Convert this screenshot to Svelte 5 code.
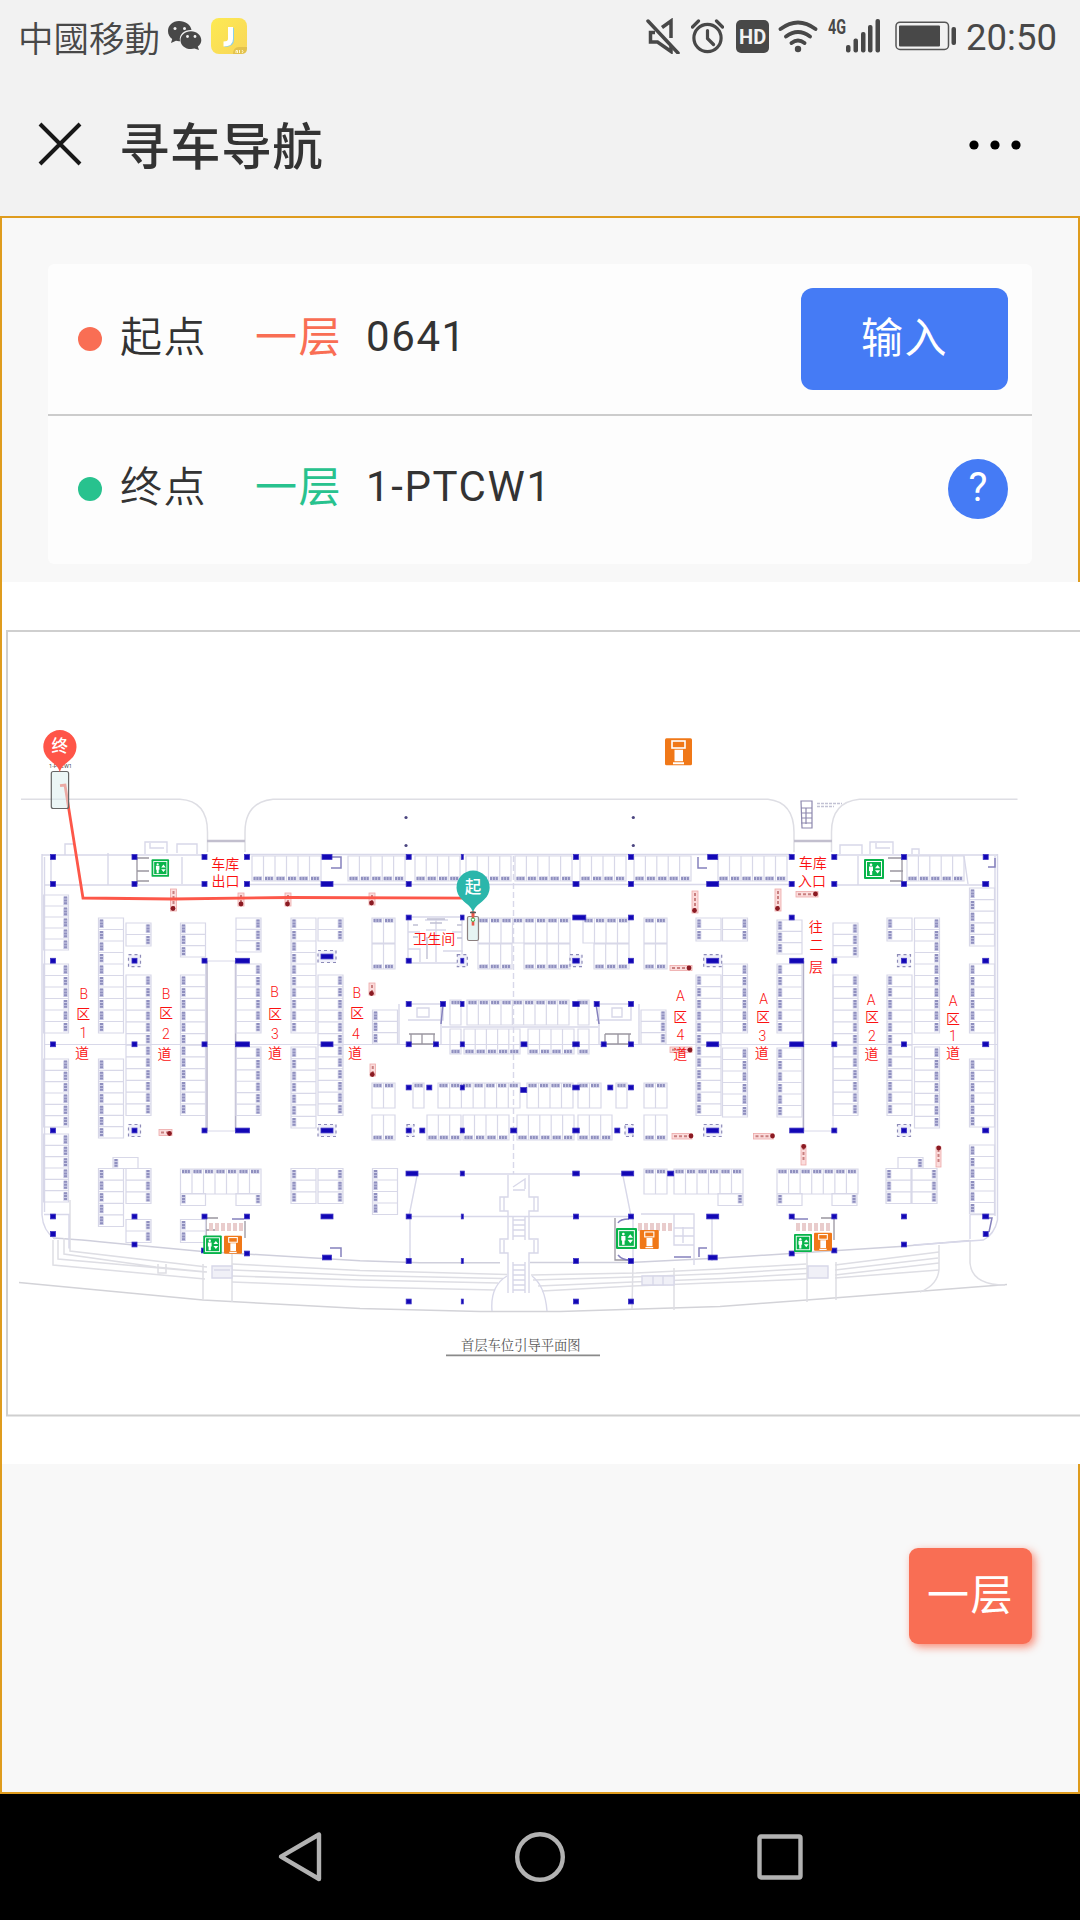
<script>
  // Vertical stacks of bays: x, y, height, number of bays, side carrying the bay numbers
  const stacks = [
    [43.5, 895, 55, 5, 'r'], [43.5, 964, 69, 6, 'r'], [43.5, 1059, 68, 6, 'r'], [43.5, 1134, 68, 6, 'r'],
    [98.5, 918, 115, 10, 'l'], [98.5, 1059, 79, 7, 'l'], [98.5, 1168.5, 58, 5, 'l'],
    [126, 923, 23, 2, 'r'], [126, 975, 140.5, 12, 'r'], [126, 1168.5, 35, 3, 'r'], [126, 1219.5, 23, 2, 'r'],
    [180.5, 923, 34, 3, 'l'], [180.5, 975, 140.5, 12, 'l'], [180.5, 1219.5, 23, 2, 'l'],
    [236, 918, 34, 3, 'r'], [236, 964, 69, 6, 'r'], [236, 1047, 68.5, 6, 'r'],
    [291, 918, 115, 10, 'l'], [291, 1047, 81, 7, 'l'], [291, 1168.5, 35, 3, 'l'],
    [318, 918, 23, 2, 'r'], [318, 975, 140.5, 12, 'r'], [318, 1168.5, 35, 3, 'r'],
    [372.5, 1010, 34, 3, 'l'], [372.5, 1168.5, 46, 4, 'l'], [641, 1010, 34, 3, 'r'],
    [696, 918, 23, 2, 'l'], [696, 975, 140.5, 12, 'l'],
    [722.5, 918, 23, 2, 'r'], [722.5, 964, 69, 6, 'r'], [722.5, 1048, 69, 6, 'r'],
    [777, 920, 34, 3, 'l'], [777, 964, 69, 6, 'l'], [777, 1048, 69, 6, 'l'],
    [833, 923, 34, 3, 'r'], [833, 975, 140.5, 12, 'r'],
    [887, 918, 23, 2, 'l'], [887, 975, 140.5, 12, 'l'], [886, 1168.5, 35, 3, 'l'],
    [914.5, 918, 115, 10, 'r'], [914.5, 1047, 81, 7, 'r'], [912, 1168.5, 35, 3, 'r'],
    [969.5, 888, 58, 5, 'l'], [969.5, 964, 69, 6, 'l'], [969.5, 1059, 68, 6, 'l'], [969.5, 1145, 69, 6, 'l'],
    [113, 1157.5, 11, 1, 'l'], [180.5, 1193.5, 12, 1, 'l'], [236, 1193.5, 12, 1, 'r'],
    [718, 1193.5, 12, 1, 'r'], [777, 1193.5, 12, 1, 'l'], [832, 1193.5, 12, 1, 'r'], [898, 1157.5, 11, 1, 'r']
  ];
  // Horizontal rows of bays: x, y, width, number of bays, side carrying the bay numbers
  const rows = [
    [252, 856, 69, 6, 'b'], [348, 856, 57, 5, 'b'], [415, 856, 45, 4, 'b'], [466, 856, 45, 4, 'b'],
    [515, 856, 57, 5, 'b'], [580, 856, 46, 4, 'b'], [634, 856, 57, 5, 'b'], [718, 856, 69, 6, 'b'], [907, 856, 57, 5, 'b'],
    [372, 918, 23, 2, 't'], [478, 918, 92, 8, 't'], [583, 918, 46, 4, 't'], [644, 918, 23, 2, 't'],
    [372, 944, 23, 2, 'b'], [478, 944, 34, 3, 'b'], [524, 944, 46, 4, 'b'], [594, 944, 35, 3, 'b'], [644, 944, 23, 2, 'b'],
    [450, 1000, 11, 1, 't'], [467, 1000, 102, 9, 't'], [578, 1000, 11, 1, 't'],
    [450, 1029, 11, 1, 'b'], [464, 1029, 56, 5, 'b'], [528, 1029, 46, 4, 'b'], [578, 1029, 11, 1, 'b'],
    [372, 1083, 23, 2, 't'], [413, 1083, 11, 1, 't'], [438, 1083, 82, 7, 't'], [527, 1083, 46, 4, 't'],
    [578, 1083, 23, 2, 't'], [616, 1083, 11, 1, 't'], [644, 1083, 23, 2, 't'],
    [372, 1115, 23, 2, 'b'], [427, 1115, 34, 3, 'b'], [463, 1115, 46, 4, 'b'], [517, 1115, 57, 5, 'b'],
    [578, 1115, 34, 3, 'b'], [644, 1115, 23, 2, 'b'],
    [180.5, 1169, 80.5, 7, 't'], [644, 1169, 23, 2, 't'], [674, 1169, 69, 6, 't'], [777, 1169, 81, 7, 't']
  ];
  // Pillars grouped by y: [x, width?]
  const pillarRows = [
    [857, [[53], [134.5], [204.5], [247], [327, 10], [408.7], [462.3, 2], [576], [631], [712.7, 10], [791.7], [834.3], [904], [985.7]]],
    [884, [[53], [134.5], [204.5], [247], [327, 12], [408.7], [576, 6], [631], [712.7, 12], [791.7], [834.3], [904], [985.7, 6]]],
    [917.5, [[408.7], [462.3, 3.5], [579.3, 13], [631], [791.7]]],
    [956.5, [[327, 12]]],
    [960.7, [[53], [134.5], [204.5], [242.5, 14], [408.7], [462.3, 3], [576, 6.5], [631], [712.7, 12], [796.7, 14], [834.3], [904], [985.7, 6]]],
    [1004, [[408.7], [443], [462.3, 3.5], [576, 6.5], [596.7], [631]]],
    [1044.3, [[53], [134.5], [204.5], [242.5, 14], [327, 12], [408.7], [436], [462.3, 4], [524, 6], [576, 6.5], [603.7], [631], [712.7, 12], [796.7, 14], [834.3], [904], [985.7, 6]]],
    [1087.5, [[408.7], [429.3], [462.3, 4], [576, 6.5], [610.3], [631]]],
    [1090, [[523.7, 6]]],
    [1130.5, [[53], [134.5], [204.5], [242.5, 14], [327, 12], [408.7], [422.3], [462.3, 4], [513.7, 6], [576, 6.5], [617.3], [631], [712.7, 12], [796.7, 14], [834.3], [904], [985.7, 6]]],
    [1173.5, [[412, 12], [462.3, 4], [576, 6.5], [627.7, 12], [670.7, 6]]],
    [1216.5, [[53], [134.5], [204.5], [247], [327, 12], [408.7], [462.3, 2], [576], [631], [712.7, 12], [791.7], [834.3], [904], [985.7, 6]]],
    [1234, [[53], [985.7]]],
    [1244.5, [[134.5], [904]]],
    [1250.5, [[204], [834.3]]],
    [1253.5, [[247], [791.7]]],
    [1257.5, [[327, 9], [712.7, 9]]],
    [1261, [[408.7], [462.3, 2], [576], [631]]],
    [1301.5, [[408.7], [462.3, 2], [576], [631]]]
  ];
  const pillars = pillarRows.flatMap(([y, list]) => list.map(([x, w = 5]) => ({ x: x - w / 2, y: y - 2.4, w })));
  const shafts = [
    [134.5, 960.7, 12], [327, 956.5, 18], [462.3, 960.7, 10], [576, 960.7, 12], [712.7, 960.7, 18], [904, 960.7, 13],
    [134.5, 1130.5, 12], [327, 1130.5, 18], [410.5, 1130.5, 7], [629, 1130.5, 8], [712.7, 1130.5, 18], [904, 1130.5, 13]
  ];
  // Barrier markers: x, y, width, height, dot x, dot y
  const barriers = [
    [170.5, 889, 6, 22, 173, 908.5], [238, 893, 6, 13, 241, 904], [285, 893, 6, 13, 287.5, 904],
    [369, 893, 6, 12, 371.5, 903], [692, 891, 6, 22, 694.5, 910.5], [775, 889, 6, 22, 777.5, 908.5],
    [796, 891.5, 22, 5.5, 815.5, 894], [369, 983, 6, 12, 371.5, 993.5], [670, 965.5, 22, 5, 689, 968],
    [370, 1064, 5.5, 12, 372.3, 1074.5], [670, 1047, 22, 5.5, 690, 1050], [672, 1133.5, 20, 5.5, 691, 1136],
    [159, 1129.5, 13, 6, 169.5, 1133.5], [753.5, 1133.5, 20, 5.5, 772.5, 1136],
    [801, 1145, 5, 20, 803.7, 1146.5], [936, 1147, 5, 20, 938.7, 1148]
  ];
  const elevators = [[160.3, 868, 17.5], [874, 869, 20], [212.5, 1244.7, 18.5], [626.5, 1238.5, 21], [803, 1243, 18]];
  const kiosks = [[678.5, 751.7, 27], [233, 1244.7, 18], [649.3, 1239.5, 19], [823, 1241.7, 18]];
  // Aisle labels, one glyph per entry: text, centre x, baseline
  const aisle = [
    ['B', 83.7, 999], ['区', 83.3, 1019.3], ['1', 83.5, 1037.7], ['道', 82, 1058.3],
    ['B', 166, 999], ['区', 166, 1018.3], ['2', 166, 1039], ['道', 164.5, 1059.3],
    ['B', 274.5, 997], ['区', 275, 1019.3], ['3', 275, 1039], ['道', 275, 1058.3],
    ['B', 356.7, 998], ['区', 357, 1018.3], ['4', 356, 1038.5], ['道', 355, 1058.3],
    ['A', 680.3, 1001], ['区', 680.3, 1022], ['4', 680.3, 1040], ['道', 680.3, 1058.8],
    ['A', 763.7, 1004], ['区', 763, 1022.3], ['3', 762.5, 1040.5], ['道', 761.7, 1058.3],
    ['A', 871, 1005], ['区', 872, 1022.3], ['2', 872, 1040.5], ['道', 871.5, 1059.3],
    ['A', 953, 1006], ['区', 953, 1024.3], ['1', 953, 1041], ['道', 953, 1058.3],
    ['往', 815.7, 931.5], ['二', 816.5, 950.3], ['层', 816, 972],
    ['车库', 225.2, 869.3], ['出口', 225.5, 885.5], ['车库', 812.7, 868.3], ['入口', 812, 885.5], ['卫生间', 434.3, 944]
  ];
  const stackPath = ([x, y, h, n]) =>
    `M${x} ${y}h25v${h}h-25z` + Array.from({ length: n - 1 }, (_, i) => `M${x} ${y + (h * (i + 1)) / n}h25`).join('');
  const rowPath = ([x, y, w, n]) =>
    `M${x} ${y}h${w}v25h${-w}z` + Array.from({ length: n - 1 }, (_, i) => `M${x + (w * (i + 1)) / n} ${y}v25`).join('');
  const bays = stacks.map(stackPath).join('') + rows.map(rowPath).join('');
  const numbers =
    stacks.map(([x, y, h, n, s]) => Array.from({ length: n }, (_, i) => `M${s === 'l' ? x + 3 : x + 22} ${y + (h * i) / n + 1.5}v8.5`).join('')).join('') +
    rows.map(([x, y, w, n, s]) => Array.from({ length: n }, (_, i) => `M${x + (w * i) / n + 1.5} ${s === 't' ? y + 2.5 : y + 22.5}h8.5`).join('')).join('');
</script>

<div class="screen">
  <header>
    <div class="status">
      <span class="carrier">中國移動</span>
      <svg class="wechat" width="35" height="32" viewBox="0 0 35 32">
        <path fill="#484848" d="M12 1C5.500 1 1 5.500 1 11c0 3.500 1.600 6 4.200 8L4 23l5-2.200c1.300.4 2.500.5 4 .4C11.500 14 18 9.500 24.500 10 23.500 4.500 18.500 1 12 1z" />
        <path fill="#484848" d="M24 11.200c-6 0-10.500 4-10.500 9S18 29 24 29c1.200 0 2.400-.2 3.500-.5L32 30l-1.200-3.500c2.200-1.600 3.500-3.800 3.500-6.300 0-5-4.500-9-10.300-9z" />
        <g fill="#f2f2f2"><circle cx="8" cy="8.500" r="1.500" /><circle cx="17.500" cy="8.500" r="1.500" /><circle cx="20.500" cy="16.500" r="1.400" /><circle cx="28" cy="16.500" r="1.400" /></g>
      </svg>
      <svg class="app" width="36" height="36" viewBox="0 0 36 36">
        <defs><linearGradient id="sun" x1="0" y1="0" x2="1" y2="1"><stop offset="0" stop-color="#fdea52" /><stop offset="1" stop-color="#f8d65a" /></linearGradient></defs>
        <rect width="36" height="36" rx="8" fill="url(#sun)" />
        <path d="M22 36c0-4 2-7 6-7h8v2q0 5-6 5z" fill="#e3c24d" />
        <path d="M21 10v12q0 5-7.500 5" fill="none" stroke="#8bd0ea" stroke-width="4" />
        <path d="M19.500 9v12q0 5-7 5" fill="none" stroke="#fff" stroke-width="5" />
        <path d="M25 35v-2.500h1.500V35M28.500 32v3M31 32l1 1.500-1 1.500" fill="none" stroke="#fff8cf" stroke-width="1" />
      </svg>
      <span class="grow"></span>
      <svg class="mute" width="35" height="36" viewBox="0 0 35 36" fill="none" stroke="#484848" stroke-width="3.500">
        <path d="M16 9.500l9-6.500v17" /><path d="M9 14.500H4.500v9.500h7l13.500 9.500v-6" /><path d="M2 3l30 32" stroke-linecap="round" />
      </svg>
      <svg class="alarm" width="33" height="36" viewBox="0 0 33 36" fill="none" stroke="#484848" stroke-width="3.200">
        <circle cx="16.500" cy="20" r="13.600" /><path d="M16.500 12.500v8l6 6M1.500 9l6-6M31.500 9l-6-6" stroke-linecap="round" />
      </svg>
      <span class="hd">HD</span>
      <svg class="wifi" width="40" height="34" viewBox="0 0 40 34" fill="none" stroke="#484848" stroke-width="3.800" stroke-linecap="round">
        <path d="M2.500 10q17.500-13 35 0M8 17.500q12-9 24 0M13.500 24q6.500-5 13 0" /><circle cx="20" cy="30" r="3.200" fill="#484848" stroke="none" />
      </svg>
      <svg class="signal" width="54" height="46" viewBox="0 -5 54 46">
        <text x="1" y="15.500" class="g4" textLength="18" lengthAdjust="spacingAndGlyphs">4G</text>
        <g fill="#484848"><rect x="19" y="27" width="4.500" height="7.500" rx="2" /><rect x="26.500" y="20.500" width="4.500" height="14" rx="2" /><rect x="34" y="14" width="4.500" height="20.500" rx="2" /><rect x="41" y="7" width="4.500" height="27.500" rx="2" /><rect x="48.500" y="1" width="4.500" height="33.500" rx="2" /></g>
      </svg>
      <svg class="battery" width="62" height="30" viewBox="0 0 62 30">
        <rect x="1" y="1.200" width="52.500" height="27.300" rx="4" fill="none" stroke="#555" stroke-width="1.500" />
        <rect x="4" y="4.500" width="41" height="21" rx="1" fill="#484848" /><rect x="56.500" y="6" width="4.500" height="18" rx="2" fill="#484848" />
      </svg>
      <span class="time">20:50</span>
    </div>
    <div class="bar">
      <svg width="44" height="44" viewBox="0 0 44 44"><path d="M2 2l40 40M42 2L2 42" stroke="#181818" stroke-width="4" /></svg>
      <h1>寻车导航</h1>
      <svg class="more" width="54" height="12" viewBox="0 0 54 12"><circle cx="6" cy="6" r="4.600" /><circle cx="27" cy="6" r="4.600" /><circle cx="48" cy="6" r="4.600" /></svg>
    </div>
  </header>

  <main>
    <section class="card">
      <div class="row">
        <i class="dot coral"></i><span class="label">起点</span><span class="floor from">一层</span><span class="value">0641</span>
        <button class="enter">输入</button>
      </div>
      <div class="row">
        <i class="dot green"></i><span class="label">终点</span><span class="floor to">一层</span><span class="value">1-PTCW1</span>
        <button class="help">?</button>
      </div>
    </section>

    <svg class="map" width="1078" height="882" viewBox="2 582 1078 882">
      <rect x="2" y="582" width="1078" height="882" fill="#fff" />
      <path d="M1080 631H7v784.500h1073" fill="none" stroke="#cfcfcf" stroke-width="2" />

      <!-- Floor plan linework is printed soft under the crisp labels -->
      <g class="plan">
      <g fill="none" stroke="#dedee4" stroke-width="1.500">
        <path d="M21 799.300H180Q207.500 801 207.500 832v20M245 852v-20q0-30 28-32.700H768q26 3 26 33v20M831.500 852v-20q0-30 28-32.700h158" />
        <path d="M19 1282.500l184 17.500 157 8.500 120 3h80l160-5 120-9 167-13" stroke="#d3d3d8" />
        <path d="M53 1238q14 .5 57 4.700l90 8.500 160 9.500 60 2h80M530 1262.500h100l90-4.500 180-11.500 70-6" stroke="#cfcfdc" />
        <path d="M70 1200v51l137 16M64 1238v16l92 13 51 5M58 1240v19l147 13M53 1240v25l152 14M232 1264l128 6.500 147 4M232 1270l128 5.500 143 3M232 1276l128 4 138 3M232 1282l128 5 135 3M531 1275l105-2 84-4 86-5M533 1280l100-3 90-3.500 84-5M538 1286l95-4 90-3.500 84-5M542 1291l91-5 174-7M835 1265l104-13M835 1270l103-12M835 1275l104-12M835 1278l104-8" />
        <path d="M939 1245v24q-1 16-19 23M970 1240v23q2 22 35 22M203 1264v36M232 1254v48M807 1253v49M836 1262v38M633 1262l-1 47M674 1268v42M158 1264v9h8v-9" />
      </g>
      <path d="M207 841h38M794 841h38" stroke="#c2bfce" stroke-width="2.400" />

      <g fill="none" stroke="#d8d8e9" stroke-width="1.400">
        <path d="M42 855H205M247 854.500h545M834 855h163M42 854v361q1 16 13 24M44.500 857v355M44 885h161M834 885h151M995 856v360M997.500 854v366q-3 14-14 20l-70 5M246 884.500h545" />
        <path d="M51 857v27M108 853v32M182 857v27M65 855v-11h10M145 854v-12h22v11M150 843v5h14M177 853v-9h20v10M840 854v-9h22v9M870 854v-12h23v12M876 843v5h14M912 854v-5h7v5M858 856v29M964 856l4 28" />
        <path d="M205.500 961v170h37M207 961h35M236 961v170M803 961v170h30M833 961v170M44 1044.500h953" stroke-width="1" />
        <path d="M513.500 856v318" stroke-dasharray="6 3" />
        <path d="M235.500 961v170M803.500 961v170M207 961v170" stroke="#b5b2c8" />
        <path d="M408 917h54v46h-54zM436 919v43M408 932h12M452 932h10M425 920h23M443 951h20M408 949h12v13M426 930h20" />
        <path d="M413 925h5M413 937h5M457 925h5M457 938h5M427 919h18M430 923h12M427 937v22" stroke="#c0c0d4" />
        <path d="M408 1004h35v16h-35M399 1004v40M417 1008v9h12v-9zM596 1004h35v16h-35M639 1004v40M612 1008v9h10v-9zM442 1027h156M441 1004v40M599 1004v40" />
        <path d="M412 1174h215M417 1176l-8 40M623 1176l8 40M410 1216.500h220M410 1216v46M633 1216v46M508 1175v22h-8v14h8v28h-8v14h8v40M529 1175v22h9v14h-9v28h9v14h-9v40M504 1197v14M534 1197v14M504 1240v13M534 1240v13" />
        <path d="M513 1220h12M513 1225h12M513 1230h12M513 1236h12M513 1265h12M513 1270h12M513 1275h12M513 1280h12M513 1285h12M513 1290h12M513 1216v24M525 1216v24M513 1262v31M525 1262v31M513 1190h12M513 1187l12-8v10" />
        <path d="M492 1311q-2-25 15-35M547 1311q-2-25-15-35M44 1214.500h25v34M970 1214.500h25M970 1215v24M712 1217v44M641 1214h53v51M674 1214v31h20M674 1228h20M674 1236h20M683 1227v16" />
        <path d="M212 1266h20v12h-20zM214 1270h16M808 1266h20v12h-20zM642 1276h32v9h-32zM653 1276v9M663 1276v9" fill="#f0f0f7" />
      </g>

      <g fill="none" stroke="#9a96a0" stroke-width="1.300">
        <path d="M137 858h12M137 871h12M137 881h12M137 857v27M409 1034h26M422 1034v10M434 1034v10M411 1034v10M409 1044h26M605 1034v10M618 1034v10M629 1034v10M605 1034h26M605 1044h26M888 858h13M890 871h13M890 881h13M902 857v27M206 1218h12M206 1230h12M821 1218h13v22M615 1218v42h16M206 1219v17M245 1221v17" />
      </g>
      <path d="M331 857h10v11h-10M698 857v11h9M988 867h7v-9M330 1248h11v9M699 1257v-9h8M674 1257h17M443 1004l-2 20M596 1004l3 20M618 1223q2-4 11-4M618 1255q4 5 12 5M988 1218h4l-3 14M232 1219h12M793 1219h15" fill="none" stroke="#8581bd" stroke-width="1.500" />

      <path d={bays} fill="none" stroke="#d8d8e8" stroke-width="1.200" />
      <path d={numbers} fill="none" stroke="#cfcfe8" stroke-width="4.600" />
      <path d={numbers} fill="none" stroke="#8f8fbe" stroke-width="3" stroke-dasharray="2 .9" />

      {#each shafts as [x, y, w]}
        <rect x={x - w / 2} y={y - 6} width={w} height="12" fill="#f0f0fa" stroke="#8d8bb8" stroke-width="1.200" stroke-dasharray="3 3" />
      {/each}
      <g fill="#1207b5" stroke="#3a30c4" stroke-width=".8">
        {#each pillars as p}<rect x={p.x} y={p.y} width={p.w} height="4.800" />{/each}
      </g>
      <g fill="#4b4580"><circle cx="406" cy="817.500" r="1.600" /><circle cx="406" cy="845.500" r="1.600" /><circle cx="633.300" cy="817.500" r="1.600" /><circle cx="633.300" cy="845.500" r="1.600" /></g>

      {#each barriers as [x, y, w, h, cx, cy]}
        <rect {x} {y} width={w} height={h} fill="#fbdcdc" stroke="#eda8a8" stroke-width=".8" />
        <path d={w > h ? `M${x + 2} ${y + h / 2}h${w - 6}` : `M${x + w / 2} ${y + 2}v${h - 5}`} stroke="#c98080" stroke-width="2" stroke-dasharray="3 2" />
        <circle {cx} {cy} r="2.400" fill="#8b1a22" />
      {/each}
      <path d="M209 1227h34M638 1227h34M796 1227h34" fill="none" stroke="#e9cccc" stroke-width="8" stroke-dasharray="4 2" />
      <g fill="none" stroke="#8d88ae" stroke-width="1.200"><path d="M801 801h11v27h-10zM801 808h11M801 813h11M801 818h11M801 823h11M806 808v16" /><path d="M817 803.500h25M817 806.500h17" stroke="#c2c2d4" stroke-dasharray="3 1" stroke-width="1.600" /></g>
      <path d="M446 1355.300h154" stroke="#8a8a8a" stroke-width="1.700" />
      </g>

      <text x="520.800" y="1350" class="caption">首层车位引导平面图</text>

      {#each aisle as [t, x, y]}<text {x} {y} class="aisle">{t}</text>{/each}

      {#each elevators as [x, y, s]}
        <g transform="translate({x - s / 2} {y - s / 2}) scale({s / 20})">
          <rect width="20" height="20" rx="1" fill="#09b44b" /><rect x="2.500" y="2.500" width="15" height="15" fill="none" stroke="#fff" stroke-width="1" />
          <circle cx="7" cy="5.800" r="1.300" fill="#fff" /><path d="M5 7.500h4v4.500H8.200V16H5.800v-4H5zM11 9.300l2.600-3.300 2.600 3.300zM11 11.300l2.600 3.300 2.600-3.300z" fill="#fff" />
        </g>
      {/each}
      {#each kiosks as [x, y, s]}
        <g transform="translate({x - s / 2} {y - s / 2}) scale({s / 27})">
          <rect width="27" height="27" rx="1.500" fill="#f07818" /><rect x="7" y="2.800" width="13" height="7" fill="none" stroke="#fff" stroke-width="1.600" />
          <path d="M9.500 11.500h8.500v11.500H9.500zM8 24h11v2H8z" fill="#fff" />
        </g>
      {/each}

      <text x="60.500" y="767.500" class="bay">1-PTCW1</text>
      <path d="M60 785.700l5-.7L83 898l90 1 117-1.500 183 .7M473 911v14.500" fill="none" stroke="#fd5749" stroke-width="2.800" />
      <rect x="51.300" y="771.500" width="17.300" height="37" rx="2" fill="#dcefee" fill-opacity=".55" stroke="#666" stroke-width="1.200" />
      <rect x="467.500" y="916.500" width="11" height="24" rx="1.500" fill="#dcefee" fill-opacity=".7" stroke="#8c8080" stroke-width="1.200" />
      <path d="M473 911v14.500" stroke="#e8584a" stroke-width="2.400" /><circle cx="473" cy="919.700" r="1.700" fill="#fff" stroke="#35b64a" />
      <path d="M470 912.500h6" stroke="#555" stroke-width="1.500" />
      <path d="M59.800 772c-2-7-6.500-8-11-13A16.600 16.600 0 1 1 71 759c-5 5-9 6-11.200 13z" fill="#ff5548" />
      <path d="M473 912.500c-2-7-6.500-8-11-13a16.600 16.600 0 1 1 22.200 0c-5 5-9 6-11.200 13z" fill="#2bb6ab" />
      <text x="59.800" y="752" class="pin">终</text><text x="473" y="892.800" class="pin">起</text>
    </svg>

    <button class="level">一层</button>
  </main>

  <nav>
    <svg width="46" height="52" viewBox="0 0 46 52"><path d="M42 3.500v44.500L4 25.700z" /></svg>
    <svg width="50" height="50" viewBox="0 0 50 50"><circle cx="25" cy="25" r="22.800" /></svg>
    <svg width="46" height="46" viewBox="0 0 46 46"><rect x="2.500" y="2.500" width="41" height="41" rx="1.500" /></svg>
  </nav>
</div>

<style>
  :global(body) { margin: 0; }
  .screen { width: 1080px; height: 1920px; display: flex; flex-direction: column; overflow: hidden; background: #f8f8f8; font-family: Roboto, "Noto Sans CJK SC", sans-serif; color: #333; }
  header { height: 216px; background: #f2f2f2; }
  .status { height: 72px; box-sizing: border-box; padding: 0 23px 0 18px; display: flex; align-items: center; color: #484848; }
  .carrier { font: 350 35.500px/72px "Noto Sans CJK TC", sans-serif; margin-top: 1px; }
  .wechat { margin: 0 0 0 7px; }
  .app { margin-left: 9px; }
  .grow { flex: 1; }
  .alarm { margin-left: 10px; }
  .hd { width: 33px; height: 33px; margin: 1px 0 0 12px; border-radius: 5px; background: #484848; color: #f2f2f2; font: 700 20px/34px Roboto, sans-serif; text-align: center; }
  .wifi { margin-left: 9px; }
  .signal { margin-left: 9px; }
  .g4 { font: 700 19.500px Roboto, sans-serif; fill: #484848; }
  .battery { margin-left: 14px; }
  .time { margin: 4px 0 0 9px; font-size: 36.500px; line-height: 72px; }
  .bar { height: 144px; box-sizing: border-box; padding: 0 58px 0 38px; display: flex; align-items: center; }
  h1 { flex: 1; margin: 8px 0 0 37px; font-size: 50.500px; font-weight: 500; line-height: 72px; letter-spacing: .6px; }
  .more { margin-top: 2px; }
  main { height: 1578px; box-sizing: border-box; border: 2px solid #df9c1e; padding-top: 46px; display: flex; flex-direction: column; background: #f8f8f8; }
  .card { height: 300px; margin: 0 46px 18px; border-radius: 6px; background: #fdfdfd; }
  .row { height: 150px; box-sizing: border-box; padding: 0 24px 0 30px; display: flex; align-items: center; font-size: 42px; letter-spacing: 1.6px; }
  .row + .row { box-shadow: inset 0 2px #ccc; }
  .dot { width: 24px; height: 24px; border-radius: 50%; }
  .coral { background: #f96e54; }
  .green { background: #28c28e; }
  .label, .floor { margin-top: -2px; line-height: 60px; }
  .label { width: 88px; margin-left: 18px; font-weight: 350; }
  .floor { width: 88px; margin-left: 47px; }
  .from { color: #f96e54; }
  .to { color: #28c28e; }
  .value { flex: 1; margin: -4px 0 0 23px; line-height: 60px; }
  button { border: 0; padding: 0; color: #fff; font: 400 42px Roboto, "Noto Sans CJK SC", sans-serif; letter-spacing: 1.6px; }
  .enter { width: 207px; height: 102px; border-radius: 12px; background: #457bf5; padding-bottom: 10px; }
  .help { width: 60px; height: 60px; border-radius: 50%; background: #457bf5; font-size: 40px; letter-spacing: 0; padding-bottom: 4px; }
  .map { display: block; flex: none; align-self: flex-start; overflow: hidden; margin-right: -2px; }
  .plan { filter: blur(.5px); }
  .aisle { font: 350 14px Roboto, "Noto Sans CJK SC", sans-serif; fill: #fb1010; text-anchor: middle; }
  .caption { font: 400 13.300px "Noto Serif CJK SC", "Noto Sans CJK SC", serif; fill: #555; text-anchor: middle; }
  .bay { font: 5.500px Roboto, sans-serif; fill: #444; text-anchor: middle; }
  .pin { font: 500 16.500px "Noto Sans CJK SC", sans-serif; fill: #fff; text-anchor: middle; }
  .level { width: 123px; height: 96px; margin: 84px 46px 0 auto; border-radius: 9px; background: #f96e54; box-shadow: 3px 3px 9px rgba(249, 110, 84, .8); padding-bottom: 10px; }
  nav { height: 126px; background: #000; display: flex; align-items: center; justify-content: center; gap: 192px; }
  nav svg { fill: none; stroke: #b2b2b2; stroke-width: 4.400; stroke-linejoin: round; }
</style>
